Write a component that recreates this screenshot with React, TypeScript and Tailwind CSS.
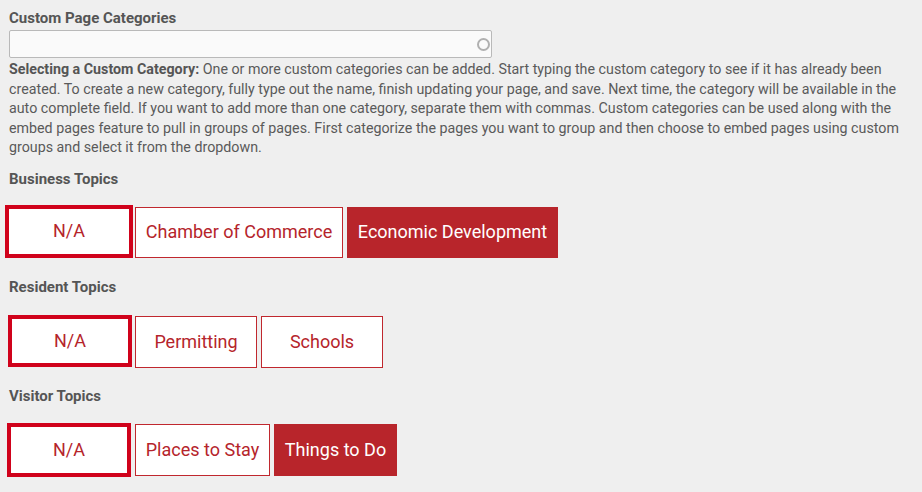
import React from "react";

const outline =
  "flex items-center justify-center bg-white border border-[#c0282e] text-[#b5242b] text-[18px] leading-none";
const filled =
  "flex items-center justify-center bg-[#b8252b] text-white text-[18px] leading-none";
const na =
  "flex items-center justify-center bg-white border-[4px] border-[#d0021b] text-[#b5242b] text-[18px] leading-none";

export default function App() {
  return (
    <div
      className="w-[922px] h-[492px] overflow-hidden bg-[#efefef] pl-[9px] text-[#555555]"
      style={{ fontFamily: "Roboto, 'Liberation Sans', sans-serif" }}
    >
      <div className="text-[15px] font-bold leading-[20px] pt-[8px]">Custom Page Categories</div>
      <div className="relative mt-[2px] h-[28px] w-[483px] border border-[#b9b9b9] bg-[#fafafa] rounded-[2px]">
        <span className="absolute right-[1px] top-[7px] h-[13px] w-[13px] rounded-full border-2 border-[#b0b0b0]" />
      </div>
      <p className="mt-[2px] text-[14.25px] leading-[19.5px] w-[910px] text-[#5a5a5a]">
        <span className="font-bold text-[#555555]">Selecting a Custom Category:</span> One or more custom categories can be added. Start typing the custom category to see if it has already been
        <br />
        created. To create a new category, fully type out the name, finish updating your page, and save. Next time, the category will be available in the
        <br />
        auto complete field. If you want to add more than one category, separate them with commas. Custom categories can be used along with the
        <br />
        embed pages feature to pull in groups of pages. First categorize the pages you want to group and then choose to embed pages using custom
        <br />
        groups and select it from the dropdown.
      </p>

      <div className="mt-[11px] text-[15px] font-bold leading-[20px]">Business Topics</div>
      <div className="mt-[16px] flex items-end">
        <div className={`${na} ml-[-4px] w-[128px] h-[53px]`}>N/A</div>
        <div className={`${outline} ml-[2px] w-[208px] h-[51px]`}>Chamber of Commerce</div>
        <div className={`${filled} ml-[4px] w-[211px] h-[51px]`}>Economic Development</div>
      </div>

      <div className="mt-[19px] text-[15px] font-bold leading-[20px]">Resident Topics</div>
      <div className="mt-[18px] flex items-start">
        <div className={`${na} ml-[-1px] w-[124px] h-[52px]`}>N/A</div>
        <div className={`${outline} ml-[3px] mt-[1px] w-[122px] h-[52px]`}>Permitting</div>
        <div className={`${outline} ml-[4px] mt-[1px] w-[122px] h-[52px]`}>Schools</div>
      </div>

      <div className="mt-[18px] text-[15px] font-bold leading-[20px]">Visitor Topics</div>
      <div className="mt-[17px] flex items-start">
        <div className={`${na} ml-[-2px] w-[124px] h-[54px]`}>N/A</div>
        <div className={`${outline} ml-[4px] mt-[1px] w-[135px] h-[52px]`}>Places to Stay</div>
        <div className={`${filled} ml-[4px] mt-[1px] w-[123px] h-[52px]`}>Things to Do</div>
      </div>
    </div>
  );
}
